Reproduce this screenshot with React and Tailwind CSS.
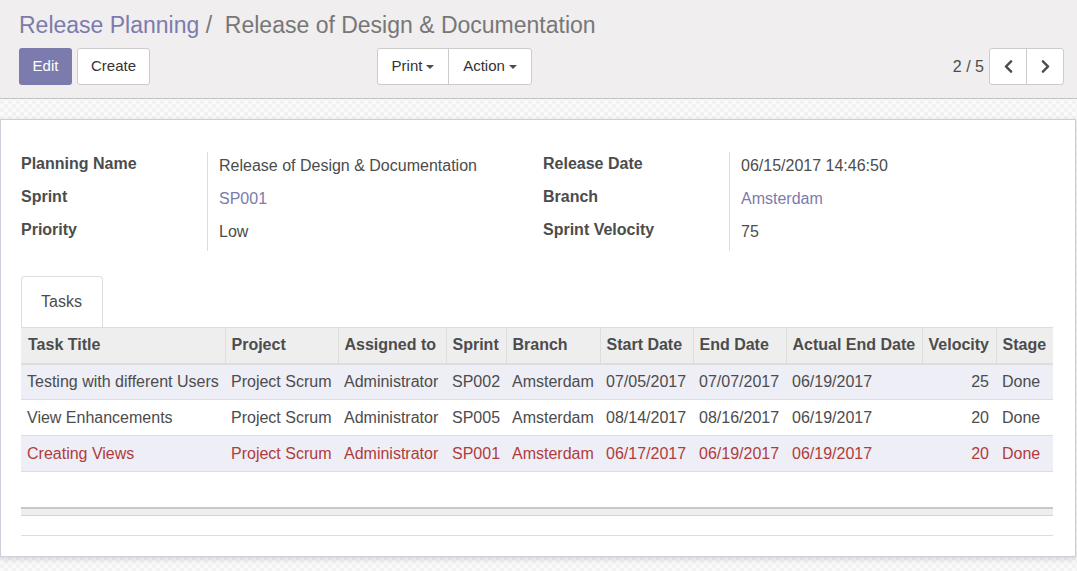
import { FaChevronLeft, FaChevronRight } from 'react-icons/fa';

const fieldsLeft = [
    { label: 'Planning Name', value: 'Release of Design & Documentation' },
    { label: 'Sprint', value: 'SP001', link: true },
    { label: 'Priority', value: 'Low' },
];

const fieldsRight = [
    { label: 'Release Date', value: '06/15/2017 14:46:50' },
    { label: 'Branch', value: 'Amsterdam', link: true },
    { label: 'Sprint Velocity', value: '75' },
];

const columns = [
    { title: 'Task Title', width: 'w-[204px]' },
    { title: 'Project', width: 'w-[113px]' },
    { title: 'Assigned to', width: 'w-[108px]' },
    { title: 'Sprint', width: 'w-[60px]' },
    { title: 'Branch', width: 'w-[94px]' },
    { title: 'Start Date', width: 'w-[93px]' },
    { title: 'End Date', width: 'w-[93px]' },
    { title: 'Actual End Date', width: 'w-[136px]' },
    { title: 'Velocity', width: 'w-[74px]' },
    { title: 'Stage', width: 'w-[57px]' },
];

const tasks = [
    ['Testing with different Users', 'Project Scrum', 'Administrator', 'SP002', 'Amsterdam', '07/05/2017', '07/07/2017', '06/19/2017', '25', 'Done'],
    ['View Enhancements', 'Project Scrum', 'Administrator', 'SP005', 'Amsterdam', '08/14/2017', '08/16/2017', '06/19/2017', '20', 'Done'],
    ['Creating Views', 'Project Scrum', 'Administrator', 'SP001', 'Amsterdam', '06/17/2017', '06/19/2017', '06/19/2017', '20', 'Done'],
];

function Caret() {
    return <span className="inline-block ml-[4px] align-middle border-x-[4px] border-x-transparent border-t-[4px] border-t-[#4c4c4c]" />;
}

function FieldGroup({ fields, width }) {
    return (
        <div className={`${width} flex`}>
            <div className="w-[187px] border-r border-[#ddd]">
                {fields.map((f) => (
                    <div key={f.label} className="h-[33px] leading-[24px] font-bold text-[#4c4c4c]">
                        {f.label}
                    </div>
                ))}
            </div>
            <div className="pl-[11px]">
                {fields.map((f) => (
                    <div
                        key={f.label}
                        className={`h-[33px] leading-[28px] ${f.link ? 'text-[#7c7bad]' : 'text-[#4c4c4c]'}`}
                    >
                        {f.value}
                    </div>
                ))}
            </div>
        </div>
    );
}

export default function App() {
    return (
        <div className="w-[1077px] h-[571px] overflow-hidden font-['Liberation_Sans',Arial,sans-serif] text-[16px] text-[#4c4c4c] bg-[#f7f7f7] bg-[image:repeating-conic-gradient(#f2f2f2_0_25%,#fafafa_0_50%)] bg-[length:8px_8px]">
            {/* control panel */}
            <div className="h-[99px] bg-[#f0eeee] border-b border-[#c4c4c4] pl-[19px] pr-[13px] pt-[9px]">
                <div className="text-[23px] leading-[32px] h-[32px]">
                    <span className="text-[#7c7bad]">Release Planning</span>
                    <span className="text-[#777]"> /&nbsp; Release of Design &amp; Documentation</span>
                </div>
                <div className="mt-[7px] flex items-center">
                    <button className="h-[37px] w-[53px] rounded-[3px] bg-[#7c7bad] text-white text-[15px]">Edit</button>
                    <button className="ml-[5px] h-[37px] w-[73px] rounded-[3px] bg-white border border-[#ccc] text-[15px] text-[#333]">Create</button>
                    <div className="ml-[227px] flex h-[37px] rounded-[3px] border border-[#ccc] bg-white text-[15px] text-[#333]">
                        <button className="w-[71px] border-r border-[#ccc]">Print<Caret /></button>
                        <button className="w-[82px]">Action<Caret /></button>
                    </div>
                    <div className="ml-auto flex items-center">
                        <span className="text-[16px] text-[#4c4c4c] mr-[5px]">2 / 5</span>
                        <div className="flex h-[37px] rounded-[3px] border border-[#ccc] bg-white text-[#4c4c4c]">
                            <button className="w-[37px] border-r border-[#ccc] flex items-center justify-center">
                                <FaChevronLeft size={15} />
                            </button>
                            <button className="w-[36px] flex items-center justify-center">
                                <FaChevronRight size={15} />
                            </button>
                        </div>
                    </div>
                </div>
            </div>

            {/* sheet */}
            <div className="pt-[20px]">
                <div className="w-[1076px] h-[438px] bg-white border border-[#cfcfdc] shadow-[0_2px_6px_rgba(0,0,0,0.15)] px-[20px] pt-[32px]">
                    <div className="flex">
                        <FieldGroup fields={fieldsLeft} width="w-[522px]" />
                        <FieldGroup fields={fieldsRight} width="w-[510px]" />
                    </div>

                    <div className="mt-[25px] flex">
                        <div className="w-[82px] h-[51px] border border-b-0 border-[#ddd] rounded-t-[4px] pl-[19px] leading-[50px] text-[#4c4c4c]">
                            Tasks
                        </div>
                    </div>

                    <table className="w-[1032px] table-fixed border-collapse">
                        <thead>
                            <tr className="bg-[#eee] h-[36px] border-t border-[#ddd] border-b-2 border-b-[#ddd]">
                                {columns.map((c) => (
                                    <th
                                        key={c.title}
                                        className={`${c.width} text-left font-bold pl-[6px] first:pl-[7px] border-r border-[#ddd] last:border-r-0 whitespace-nowrap`}
                                    >
                                        {c.title}
                                    </th>
                                ))}
                            </tr>
                        </thead>
                        <tbody>
                            {tasks.map((row, i) => (
                                <tr
                                    key={row[0]}
                                    className={`h-[36px] border-b border-[#ddd] ${i % 2 === 0 ? 'bg-[#eeeef6]' : 'bg-white'} ${i === 2 ? 'text-[#b03c3c]' : 'text-[#4c4c4c]'}`}
                                >
                                    {row.map((cell, j) => (
                                        <td
                                            key={j}
                                            className={`whitespace-nowrap ${j === 8 ? 'text-right pr-[7px]' : 'pl-[6px]'}`}
                                        >
                                            {cell}
                                        </td>
                                    ))}
                                </tr>
                            ))}
                        </tbody>
                    </table>

                    <div className="mt-[35px] w-[1032px]">
                        <div className="h-[9px] bg-[#eee] border-t-2 border-[#c8c8c8] border-b border-b-[#d4d4d4]" />
                        <div className="h-[20px] border-b border-[#ddd]" />
                    </div>
                </div>
            </div>
        </div>
    );
}
